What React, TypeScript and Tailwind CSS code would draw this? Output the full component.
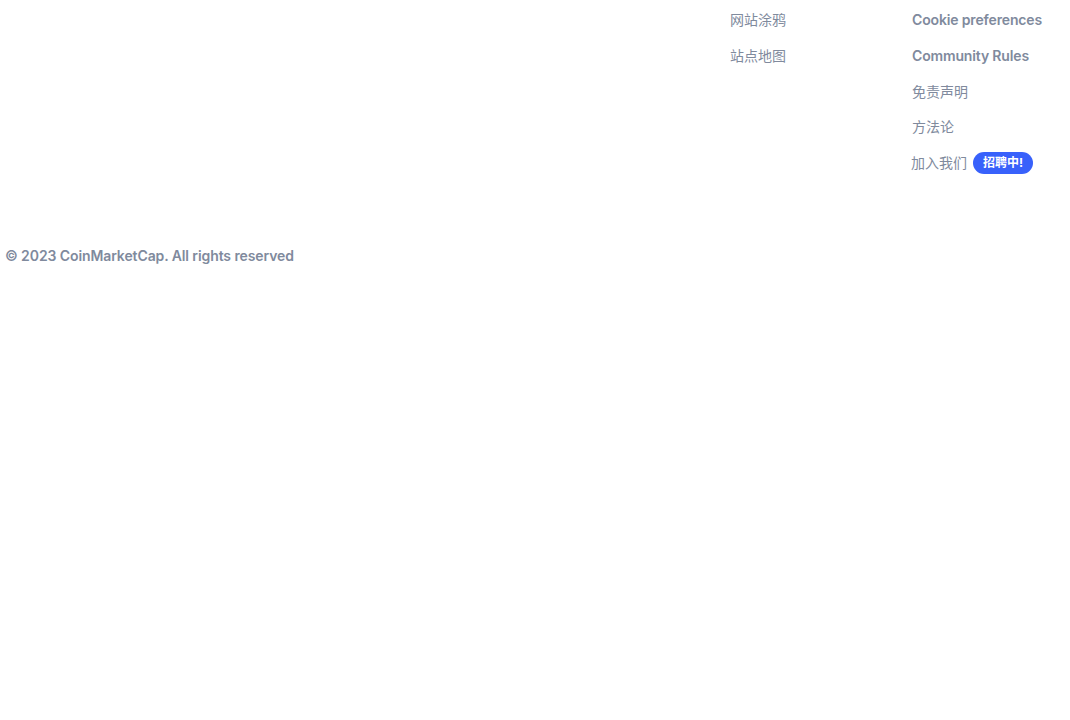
const font = { fontFamily: '"Inter", "Noto Sans CJK SC", sans-serif' };

function Row({ children }: { children: React.ReactNode }) {
    return <div className="h-[36px] flex items-center text-[14px] leading-5 text-[#808a9d]">{children}</div>;
}

export default function App() {
    return (
        <div className="w-[1070px] h-[720px] bg-white" style={font}>
            <div className="flex pt-[2px]">
                <div className="flex-1" />
                <div className="w-[182px] flex flex-col">
                    <Row>网站涂鸦</Row>
                    <Row>站点地图</Row>
                </div>
                <div className="w-[158px] flex flex-col">
                    <Row><span className="font-semibold tracking-[-0.15px]">Cookie preferences</span></Row>
                    <Row><span className="font-semibold tracking-[-0.15px]">Community Rules</span></Row>
                    <div className="h-[35.5px] flex items-center text-[14px] leading-5 text-[#808a9d]">免责声明</div>
                    <div className="h-[35.5px] flex items-center text-[14px] leading-5 text-[#808a9d]">方法论</div>
                    <div className="h-[35.5px] flex items-center text-[14px] leading-5 text-[#808a9d] -ml-px">
                        加入我们
                        <span className="ml-[6px] h-[22px] w-[60px] rounded-full bg-[#3861fb] text-white text-[12px] font-bold flex items-center justify-center">
                            招聘中!
                        </span>
                    </div>
                </div>
            </div>
            <div className="mt-[65px] pl-[5px] text-[14px] leading-5 font-semibold tracking-[-0.1px] text-[#808a9d]">
                © 2023 CoinMarketCap. All rights reserved
            </div>
        </div>
    );
}
